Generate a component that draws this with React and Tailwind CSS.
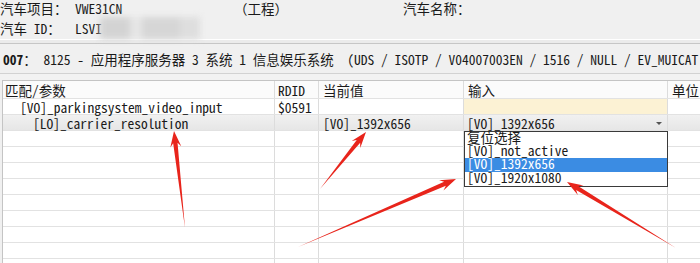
import React from 'react'

const font = "font-['Noto_Sans_Mono_CJK_SC','Liberation_Mono','Noto_Sans_CJK_SC',monospace]"

// tapered red annotation arrow, tail -> tip
const arrowPoints = (tx, ty, hx, hy, hl = 16, hw = 5.5, sw = 2.2) => {
    const len = Math.hypot(hx - tx, hy - ty)
    const ux = (hx - tx) / len
    const uy = (hy - ty) / len
    const nx = -uy
    const ny = ux
    const p = (d, w) => `${hx - ux * d + nx * w},${hy - uy * d + ny * w}`
    return [
        `${tx},${ty}`,
        p(hl - 4, sw),
        p(hl, hw),
        `${hx},${hy}`,
        p(hl, -hw),
        p(hl - 4, -sw),
    ].join(' ')
}

const arrows = [
    [185, 228, 174, 131],
    [320, 189, 366, 132],
    [298, 247, 456, 179],
    [676, 248, 567, 182],
]

const Row = ({ c1, c2, c3, c4, c5, className = '', c1Indent = 'pl-[2px]', c4Class = '' }) => (
    <div className={`flex h-[16px] border-b border-[#e2e2e2] ${className}`}>
        <div className={`w-[272px] shrink-0 border-r border-[#dcdcdc] ${c1Indent} leading-[17px] whitespace-nowrap`}>{c1}</div>
        <div className="w-[44px] shrink-0 border-r border-[#dcdcdc] pl-[3px] leading-[17px]">{c2}</div>
        <div className="w-[145px] shrink-0 border-r border-[#dcdcdc] pl-[4px] leading-[17px] whitespace-nowrap">{c3}</div>
        <div className={`relative w-[204px] shrink-0 border-r border-[#dcdcdc] leading-[17px] whitespace-nowrap ${c4Class}`}>{c4}</div>
        <div className="flex-1 pl-[4px] leading-[17px]">{c5}</div>
    </div>
)

const Option = ({ children, className }) => (
    <div className={`pl-[2px] ${className}`}>
        <div className="relative top-[-3px] h-[17px] leading-[17px] whitespace-nowrap">{children}</div>
    </div>
)

export default function App() {
    return (
        <div className={`relative w-[700px] h-[263px] overflow-hidden bg-[#f0f0f0] text-[13.5px] text-[#1a1a1a] ${font}`}>
            {/* vehicle info */}
            <div className="h-[39px]">
                <div className="flex h-[16px] leading-[17px] whitespace-nowrap">
                    <span className="w-[75px] shrink-0">汽车项目：</span>
                    <span className="w-[159px] shrink-0">VWE31CN</span>
                    <span className="w-[169px] shrink-0">（工程）</span>
                    <span>汽车名称：</span>
                </div>
                <div className="flex h-[16px] mt-[4px] leading-[16px] whitespace-nowrap items-center">
                    <span className="w-[75px] shrink-0">汽车 ID：</span>
                    <span>LSVI</span>
                    <span className="ml-[-2px] inline-flex h-[22px] w-[100px] blur-[3px]">
                        <span className="w-[30px] bg-[#d3d3d3]"></span>
                        <span className="w-[12px] bg-[#e6e6e6]"></span>
                        <span className="w-[38px] bg-[#d6d6d6]"></span>
                        <span className="w-[20px] bg-[#dedede]"></span>
                    </span>
                </div>
            </div>
            <div className="h-[1px] bg-white"></div>
            <div className="h-[3px] bg-[#ebebeb]"></div>
            <div className="h-[1px] bg-[#c6c6c6]"></div>

            {/* system title */}
            <div className="h-[29px] flex items-center pl-[3px] pt-[1px] whitespace-pre overflow-hidden">
                <span className="font-bold">007</span>
                <span>： 8125 - 应用程序服务器 3 系统 1 信息娱乐系统  (UDS / ISOTP / V04007003EN / 1516 / NULL / EV_MUICAT</span>
            </div>
            <div className="h-[1px] bg-[#d2d2d2]"></div>
            <div className="h-[6px] bg-[#f2f2f2]"></div>

            {/* table */}
            <div className="ml-[2px] border-l border-t border-[#c4c4c4] bg-white">
                <div className="flex h-[18px] border-b border-[#e2e2e2] bg-[#fbfbfb]">
                    <div className="w-[272px] shrink-0 border-r border-[#dcdcdc] pl-[2px] leading-[18px]">匹配/参数</div>
                    <div className="w-[44px] shrink-0 border-r border-[#dcdcdc] pl-[3px] leading-[18px]">RDID</div>
                    <div className="w-[145px] shrink-0 border-r border-[#dcdcdc] pl-[4px] leading-[18px]">当前值</div>
                    <div className="w-[204px] shrink-0 border-r border-[#dcdcdc] pl-[4px] leading-[18px]">输入</div>
                    <div className="flex-1 pl-[4px] leading-[18px]">单位</div>
                </div>
                <Row
                    c1="[VO]_parkingsystem_video_input"
                    c1Indent="pl-[17px]"
                    c2="$0591"
                    c4Class="bg-[#fcf2d4]"
                />
                <Row
                    className="bg-gradient-to-b from-[#f1f1f1] to-[#e6e6e6]"
                    c1="[LO]_carrier_resolution"
                    c1Indent="pl-[30px]"
                    c3="[VO]_1392x656"
                    c4Class="pl-[3px]"
                    c4={
                        <>
                            [VO]_1392x656
                            <span className="absolute right-[5px] top-[7px] w-0 h-0 border-l-[3px] border-r-[3px] border-t-[3px] border-l-transparent border-r-transparent border-t-[#555]"></span>
                            <div className="absolute left-0 top-[16px] z-10 w-[204px] border border-[#3a3a3a] bg-white">
                                <Option className="h-[13px]">复位选择</Option>
                                <Option className="h-[13px]">[VO]_not_active</Option>
                                <Option className="h-[14px] bg-[#3b8ce3] text-white">[VO]_1392x656</Option>
                                <Option className="h-[14px]">[VO]_1920x1080</Option>
                            </div>
                        </>
                    }
                />
                {Array.from({ length: 9 }).map((_, i) => (
                    <Row key={i} />
                ))}
            </div>

            {/* annotation arrows */}
            <svg className="absolute inset-0 pointer-events-none z-30" width="700" height="263">
                {arrows.map(([tx, ty, hx, hy], i) => (
                    <polygon key={i} points={arrowPoints(tx, ty, hx, hy)} fill="#e8241b" />
                ))}
            </svg>
        </div>
    )
}
